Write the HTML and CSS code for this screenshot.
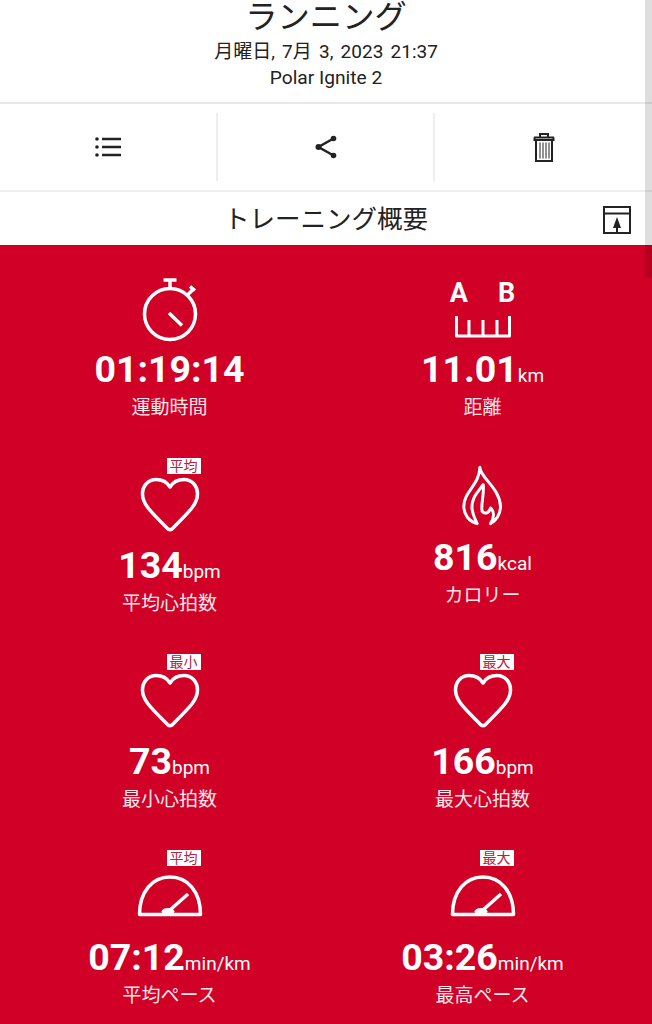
FILE: index.html
```html
<!DOCTYPE html>
<html lang="ja">
<head>
<meta charset="utf-8">
<title>ランニング</title>
<link rel="stylesheet" href="styles.css">
</head>
<body>
<div class="page">
  <header class="head">
    <h1 class="title">ランニング</h1>
    <p class="date">月曜日, 7月 3, 2023 21:37</p>
    <p class="device">Polar Ignite 2</p>
  </header>
  <nav class="actions">
    <div class="action">
      <svg width="28" height="24" viewBox="0 0 28 24"><circle cx="3" cy="4" r="1.800" class="fill"/><circle cx="3" cy="12" r="1.800" class="fill"/><circle cx="3" cy="20" r="1.800" class="fill"/><path d="M8 4h19M8 12h19M8 20h19" class="line"/></svg>
    </div>
    <div class="action">
      <svg width="24" height="24" viewBox="0 0 24 24"><path d="M19.500 3.500 4.500 12l15 8.500" class="line"/><circle cx="19.500" cy="3.500" r="2.800" class="fill"/><circle cx="4.500" cy="12" r="3" class="fill"/><circle cx="19.500" cy="20.500" r="2.800" class="fill"/></svg>
    </div>
    <div class="action">
      <svg width="22" height="30" viewBox="0 0 22 30"><path d="M7 5V2h8v3M1 5.500h20M1.500 5.500V8h19V5.500M3 8v21h16V8z" class="line thin"/><path d="M7 10.500v16M10 10.500v16M13 10.500v16M16 10.500v16" class="line hair"/></svg>
    </div>
  </nav>
  <div class="section">
    <h2 class="section-title">トレーニング概要</h2>
    <svg class="section-ico" width="28" height="28" viewBox="0 0 28 28"><path d="M1 1h26v26H1zM1 7.500h26" class="line thin"/><path d="M14 11l4 11h-8z" class="fill"/><path d="M14 20v7" class="line thin"/></svg>
  </div>
  <main class="stats">
    <section class="stat">
      <div class="icon">
        <svg class="watch" width="60" height="66" viewBox="0 0 60 66"><circle cx="30" cy="36" r="25.500" class="w"/><path d="M23.500 2h13M30 3v7M47.500 17l6-6M50 8.500l5 4M29 35l13 12.500" class="w"/></svg>
      </div>
      <div class="value">01:19:14</div>
      <div class="label">運動時間</div>
    </section>
    <section class="stat">
      <div class="icon ab">
        <div class="ab-letters"><span>A</span><span>B</span></div>
        <svg width="56" height="22" viewBox="0 0 56 22"><path d="M1.500 0v20h53V0M14 4v16M28 4v16M42 4v16" class="w thinw"/></svg>
      </div>
      <div class="value">11.01<small>km</small></div>
      <div class="label">距離</div>
    </section>
    <section class="stat">
      <div class="icon">
        <span class="tag">平均</span>
        <svg class="heart" width="60" height="56" viewBox="0 0 60 56"><path d="M30 10C27 5 22 2.500 16 2.500 8 2.500 2.500 9 2.500 17 2.500 27 10 34 28 52q2 1.500 4 0C50 34 57.500 27 57.500 17 57.500 9 52 2.500 44 2.500 38 2.500 33 5 30 10z" class="w"/></svg>
      </div>
      <div class="value">134<small>bpm</small></div>
      <div class="label">平均心拍数</div>
    </section>
    <section class="stat stat-flame">
      <div class="icon">
        <svg class="flame" width="43" height="62" viewBox="122 28 128 186"><path d="M178 38C180 70 238 100 240 155 240 180 225 200 210 207 222 190 222 170 210 160 205 175 195 180 185 170 180 150 192 120 188 90 175 110 150 130 155 165 158 185 165 195 170 207 145 200 130 180 130 155 130 110 178 90 178 38z" class="flame-line"/></svg>
      </div>
      <div class="value">816<small>kcal</small></div>
      <div class="label">カロリー</div>
    </section>
    <section class="stat">
      <div class="icon">
        <span class="tag">最小</span>
        <svg class="heart" width="60" height="56" viewBox="0 0 60 56"><path d="M30 10C27 5 22 2.500 16 2.500 8 2.500 2.500 9 2.500 17 2.500 27 10 34 28 52q2 1.500 4 0C50 34 57.500 27 57.500 17 57.500 9 52 2.500 44 2.500 38 2.500 33 5 30 10z" class="w"/></svg>
      </div>
      <div class="value">73<small>bpm</small></div>
      <div class="label">最小心拍数</div>
    </section>
    <section class="stat">
      <div class="icon">
        <span class="tag">最大</span>
        <svg class="heart" width="60" height="56" viewBox="0 0 60 56"><path d="M30 10C27 5 22 2.500 16 2.500 8 2.500 2.500 9 2.500 17 2.500 27 10 34 28 52q2 1.500 4 0C50 34 57.500 27 57.500 17 57.500 9 52 2.500 44 2.500 38 2.500 33 5 30 10z" class="w"/></svg>
      </div>
      <div class="value">166<small>bpm</small></div>
      <div class="label">最大心拍数</div>
    </section>
    <section class="stat">
      <div class="icon">
        <span class="tag">平均</span>
        <svg class="gauge" width="66" height="44" viewBox="0 0 66 44"><path d="M2.500 40.500C2.500 18 15 3 33 3s30.500 15 30.500 37.500z" class="w"/><path d="M33 36 51 20" class="w"/><ellipse cx="31" cy="37.500" rx="6.500" ry="3.500" fill="#fff"/></svg>
      </div>
      <div class="value">07:12<small>min/km</small></div>
      <div class="label">平均ペース</div>
    </section>
    <section class="stat">
      <div class="icon">
        <span class="tag">最大</span>
        <svg class="gauge" width="66" height="44" viewBox="0 0 66 44"><path d="M2.500 40.500C2.500 18 15 3 33 3s30.500 15 30.500 37.500z" class="w"/><path d="M33 36 51 20" class="w"/><ellipse cx="31" cy="37.500" rx="6.500" ry="3.500" fill="#fff"/></svg>
      </div>
      <div class="value">03:26<small>min/km</small></div>
      <div class="label">最高ペース</div>
    </section>
  </main>
  <div class="scrollbar"></div>
</div>
</body>
</html>
```

FILE: styles.css
```css
html, body {
  margin: 0;
  padding: 0;
  background: #fff;
}
.page {
  position: relative;
  width: 652px;
  height: 1024px;
  overflow: hidden;
  font-family: Roboto, "Noto Sans CJK JP", sans-serif;
  color: #222;
  display: flex;
  flex-direction: column;
}
.head {
  flex: none;
  height: 102px;
  text-align: center;
  border-bottom: 2px solid #e8e8e8;
}
.title {
  margin: 0;
  font-size: 32.300px;
  line-height: 34px;
  font-weight: 400;
}
.date {
  margin: 6px 0 0;
  font-size: 19px;
  word-spacing: 2.500px;
  line-height: 24px;
}
.device {
  margin: 2px 0 0;
  font-size: 19.200px;
  line-height: 24px;
}
.actions {
  flex: none;
  display: grid;
  grid-template-columns: 218px 217px 1fr;
  height: 86px;
  border-bottom: 2px solid #eee;
  align-items: center;
}
.action {
  height: 68px;
  display: flex;
  align-items: center;
  justify-content: center;
  border-right: 2px solid #eee;
}
.action:last-child {
  border-right: 0;
}
.line { fill: none; stroke: #222; stroke-width: 2.500; }
.line.thin { stroke-width: 2; }
.line.hair { stroke-width: 1; }
.fill { fill: #222; }
.section {
  flex: none;
  position: relative;
  height: 53px;
  box-sizing: border-box;
  padding-bottom: 4px;
  display: flex;
  align-items: center;
  justify-content: center;
}
.section-title {
  margin: 0;
  font-size: 25.500px;
  font-weight: 400;
}
.section-ico {
  position: absolute;
  right: 21px;
  top: 14px;
}
.stats {
  flex: 1;
  min-height: 0;
  overflow: hidden;
  background: #d00026;
  border-top: 1px solid #b00a28;
  display: grid;
  grid-template-columns: 313px 313px;
  grid-template-rows: repeat(4, 196px);
  padding: 32px 13px 0;
  color: #fff;
}
.stat {
  display: flex;
  flex-direction: column;
  align-items: center;
}
.stat-flame {
  margin-top: -8px;
}
.icon {
  flex: none;
  position: relative;
  width: 66px;
  height: 66px;
  display: flex;
  align-items: flex-end;
  justify-content: center;
}
.heart {
  margin-bottom: 7px;
}
.gauge {
  margin-bottom: 14px;
}
.flame {
  margin-bottom: 6px;
}
.ab {
  flex-direction: column;
  align-items: center;
  justify-content: flex-start;
}
.ab-letters {
  display: flex;
  gap: 30px;
  font-size: 27px;
  font-weight: 700;
  line-height: 30px;
  margin-bottom: 8px;
}
.w { fill: none; stroke: #fff; stroke-width: 3.500; stroke-linejoin: round; }
.thinw { stroke-width: 3; }
.flame-line { fill: none; stroke: #fff; stroke-width: 9; stroke-linejoin: round; }
.tag {
  position: absolute;
  left: 30px;
  top: -16px;
  background: #fff;
  color: #b3233b;
  font-size: 14px;
  line-height: 16px;
  height: 16px;
  width: 34px;
  text-align: center;
  overflow: hidden;
}
.value {
  margin-top: 4px;
  font-size: 37.500px;
  font-weight: 700;
  line-height: 42px;
  white-space: nowrap;
}
.value small {
  font-size: 19px;
  font-weight: 400;
  line-height: 1;
}
.label {
  margin-top: 5px;
  font-size: 19px;
  line-height: 26px;
  color: #fbe6ea;
}
.scrollbar {
  position: absolute;
  right: 0;
  top: 0;
  width: 7px;
  height: 278px;
  background: rgba(0, 0, 0, 0.13);
}
```
